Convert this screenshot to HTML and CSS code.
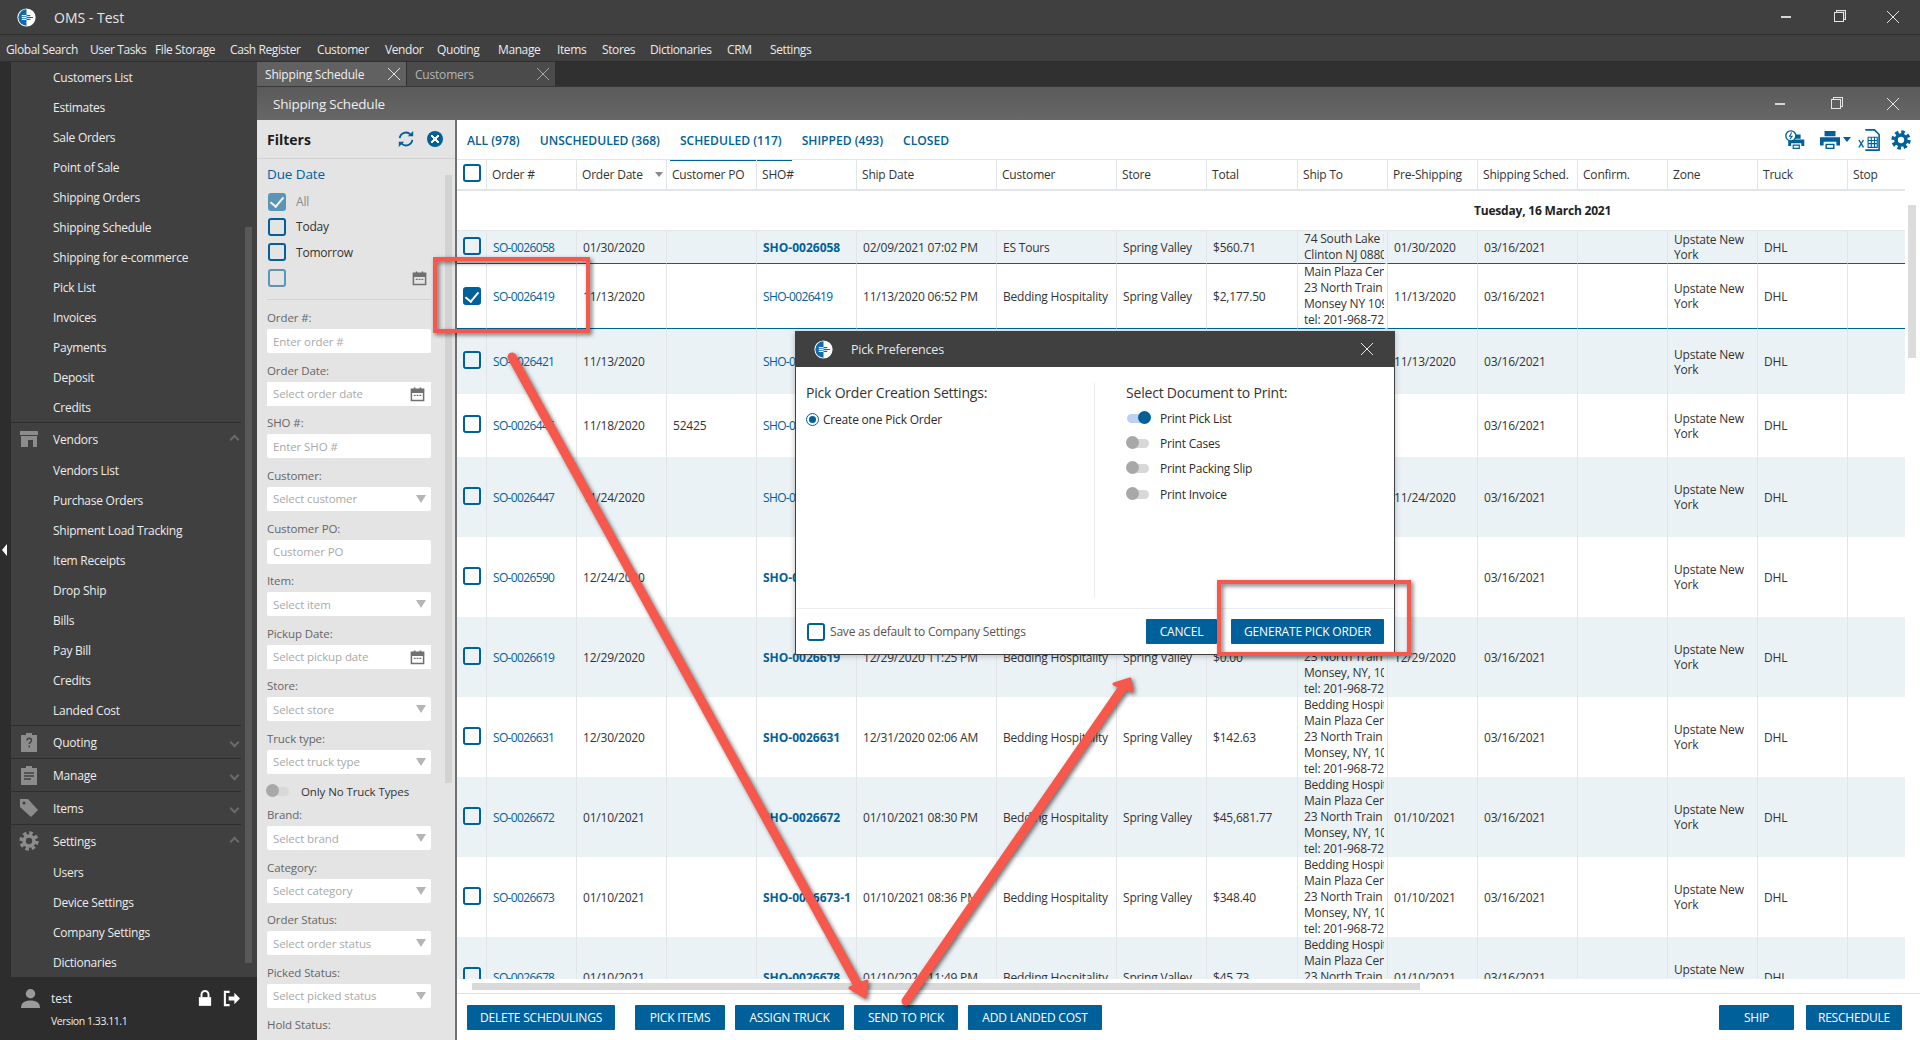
FILE: index.html
```html
<!DOCTYPE html>
<html lang="en">
<head>
  <meta charset="UTF-8">
  <title>OMS - Test</title>
  <link rel="stylesheet" href="styles.css">
</head>
<body>
  <svg class="icon-defs" width="0" height="0">
    <symbol id="logo" viewBox="0 0 20 20">
      <circle cx="10" cy="10" r="9.6" fill="#fff"/>
      <path d="M10 1.4a8.6 8.6 0 0 0 0 17.2z" fill="#0f6ca8"/>
      <path d="M5 8h9M5 10h12M5 12h9" stroke="#0f6ca8" stroke-width="1.2"/>
      <path d="M5 8h5M5 10h5M5 12h5" stroke="#fff" stroke-width="1.2"/>
    </symbol>
    <symbol id="gear" viewBox="0 0 24 24">
      <circle cx="12" cy="12" r="6" fill="none" stroke="currentColor" stroke-width="4.4"/>
      <circle cx="12" cy="12" r="9.6" fill="none" stroke="currentColor" stroke-width="4" stroke-dasharray="4.2 3.34"/>
    </symbol>
    <symbol id="calendar" viewBox="0 0 16 16">
      <path d="M1.5 3h13v12h-13zM1.5 6.2h13" fill="none" stroke="currentColor" stroke-width="1.6"/>
      <path d="M1 2.6h14v3.4H1zM4 1h1.8v2H4zM10.2 1H12v2h-1.8z" fill="currentColor"/>
      <path d="M4 9.5h2M7 9.5h2M10 9.5h2" stroke="currentColor" stroke-width="1.2"/>
    </symbol>
    <symbol id="printer" viewBox="0 0 24 22">
      <path d="M6 1h12v6H6zM1 8h22v9h-4v-4H5v4H1zM7 15h10v6H7z" fill="currentColor"/>
      <path d="M8.6 16.6h6.8v2.8H8.6z" fill="#fff"/>
    </symbol>
  </svg>

  <header class="titlebar">
    <svg class="logo"><use href="#logo"/></svg>
    <span class="app-title">OMS - Test</span>
    <div class="win-controls">
      <span class="win-min"></span>
      <span class="win-restore"></span>
      <span class="win-close"></span>
    </div>
  </header>

  <nav class="menubar">
    <a>Global Search</a><a>User Tasks</a><a>File Storage</a><a>Cash Register</a><a>Customer</a><a>Vendor</a><a>Quoting</a><a>Manage</a><a>Items</a><a>Stores</a><a>Dictionaries</a><a>CRM</a><a>Settings</a>
  </nav>

  <div class="workspace">
    <aside class="sidebar">
      <div class="side-nav">
        <a class="side-link">Customers List</a>
        <a class="side-link">Estimates</a>
        <a class="side-link">Sale Orders</a>
        <a class="side-link">Point of Sale</a>
        <a class="side-link">Shipping Orders</a>
        <a class="side-link">Shipping Schedule</a>
        <a class="side-link">Shipping for e-commerce</a>
        <a class="side-link">Pick List</a>
        <a class="side-link">Invoices</a>
        <a class="side-link">Payments</a>
        <a class="side-link">Deposit</a>
        <a class="side-link">Credits</a>
        <div class="side-group">
          <svg class="side-icon" viewBox="0 0 20 20"><path d="M1 2h18v4H1zM2 7h16v11h-4v-7H9v7H2z" fill="#8c8c8c"/></svg>
          Vendors<span class="chev up"></span>
        </div>
        <a class="side-link">Vendors List</a>
        <a class="side-link">Purchase Orders</a>
        <a class="side-link">Shipment Load Tracking</a>
        <a class="side-link">Item Receipts</a>
        <a class="side-link">Drop Ship</a>
        <a class="side-link">Bills</a>
        <a class="side-link">Pay Bill</a>
        <a class="side-link">Credits</a>
        <a class="side-link">Landed Cost</a>
        <div class="side-group">
          <svg class="side-icon" viewBox="0 0 20 20"><path d="M2 3h5V1h6v2h5v17H2z" fill="#8c8c8c"/><path d="M8 8.5c0-3 4.500-3 4.500 0 0 2-2.200 1.800-2.200 3.500M10.300 13.500v2" stroke="#404040" stroke-width="1.400" fill="none"/></svg>
          Quoting<span class="chev"></span>
        </div>
        <div class="side-group">
          <svg class="side-icon" viewBox="0 0 20 20"><path d="M2 3h5V1h6v2h5v17H2z" fill="#8c8c8c"/><path d="M5 8h10M5 11h10M5 14h7" stroke="#404040" stroke-width="1.500"/></svg>
          Manage<span class="chev"></span>
        </div>
        <div class="side-group">
          <svg class="side-icon" viewBox="0 0 20 20"><path d="M1 1h8l10 11-7 7L1 9z" fill="#8c8c8c"/><circle cx="5" cy="5" r="1.500" fill="#404040"/></svg>
          Items<span class="chev"></span>
        </div>
        <div class="side-group">
          <svg class="side-icon gear-icon"><use href="#gear"/></svg>
          Settings<span class="chev up"></span>
        </div>
        <a class="side-link">Users</a>
        <a class="side-link">Device Settings</a>
        <a class="side-link">Company Settings</a>
        <a class="side-link">Dictionaries</a>
      </div>
      <div class="side-foot">
        <div class="user-row">
          <svg class="user-icon" viewBox="0 0 20 22"><circle cx="10" cy="6" r="5" fill="#9a9a9a"/><path d="M0 21c0-6 4-8 10-8s10 2 10 8z" fill="#9a9a9a"/></svg>
          <span class="user-name">test</span>
          <svg class="lock-icon" viewBox="0 0 16 20"><path d="M4 9V6a4 4 0 0 1 8 0v3" fill="none" stroke="#fff" stroke-width="2.200"/><path d="M1 9h14v10H1z" fill="#fff"/></svg>
          <svg class="logout-icon" viewBox="0 0 18 18"><path d="M7 2H2v14h5" fill="none" stroke="#fff" stroke-width="2.200"/><path d="M6 7h6V3l6 6-6 6v-4H6z" fill="#fff"/></svg>
        </div>
        <div class="version">Version 1.33.11.1</div>
      </div>
      <span class="side-track"></span>
      <span class="collapse-arrow"></span>
    </aside>

    <div class="content">
      <div class="doc-tabs">
        <div class="doc-tab active">Shipping Schedule<span class="x-mark"></span></div>
        <div class="doc-tab">Customers<span class="x-mark dim"></span></div>
      </div>

      <div class="win-head">
        <span>Shipping Schedule</span>
        <div class="win-controls small">
          <span class="win-min"></span>
          <span class="win-restore"></span>
          <span class="win-close"></span>
        </div>
      </div>

      <div class="win-body">
        <section class="filters">
          <div class="filters-head">
            <h2>Filters</h2>
            <svg class="refresh" viewBox="0 0 20 20"><path d="M3 9a7 7 0 0 1 12-4M17 11a7 7 0 0 1-12 4" fill="none" stroke="#00609a" stroke-width="2"/><path d="M12 7h6V1zM8 13H2v6z" fill="#00609a"/></svg>
            <span class="close-round"></span>
          </div>
          <div class="filters-body">
            <h3>Due Date</h3>
            <label class="check-row muted"><span class="chk on"></span>All</label>
            <label class="check-row"><span class="chk"></span>Today</label>
            <label class="check-row"><span class="chk"></span>Tomorrow</label>
            <label class="check-row"><span class="chk faded"></span><svg class="cal push"><use href="#calendar"/></svg></label>
            <hr class="filter-rule">

            <div class="field"><label>Order #:</label><input class="box" placeholder="Enter order #"></div>
            <div class="field"><label>Order Date:</label><div class="box square">Select order date<svg class="cal"><use href="#calendar"/></svg></div></div>
            <div class="field"><label>SHO #:</label><input class="box" placeholder="Enter SHO #"></div>
            <div class="field"><label>Customer:</label><div class="box">Select customer<span class="caret"></span></div></div>
            <div class="field"><label>Customer PO:</label><input class="box" placeholder="Customer PO"></div>
            <div class="field"><label>Item:</label><div class="box">Select item<span class="caret"></span></div></div>
            <div class="field"><label>Pickup Date:</label><div class="box square">Select pickup date<svg class="cal"><use href="#calendar"/></svg></div></div>
            <div class="field"><label>Store:</label><div class="box">Select store<span class="caret"></span></div></div>
            <div class="field"><label>Truck type:</label><div class="box">Select truck type<span class="caret"></span></div></div>
            <div class="only-row"><span class="toggle"></span>Only No Truck Types</div>
            <div class="field"><label>Brand:</label><div class="box">Select brand<span class="caret"></span></div></div>
            <div class="field"><label>Category:</label><div class="box">Select category<span class="caret"></span></div></div>
            <div class="field"><label>Order Status:</label><div class="box">Select order status<span class="caret"></span></div></div>
            <div class="field"><label>Picked Status:</label><div class="box">Select picked status<span class="caret"></span></div></div>
            <div class="field"><label>Hold Status:</label></div>
            <span class="filter-track"></span>
          </div>
        </section>

        <section class="orders">
          <div class="status-tabs">
            <a>ALL (978)</a><a>UNSCHEDULED (368)</a><a class="current">SCHEDULED (117)</a><a>SHIPPED (493)</a><a>CLOSED</a>
            <div class="tools">
              <svg class="tool first" viewBox="0 0 24 24">
                <use href="#printer" x="3" y="4" width="21" height="20"/>
                <circle cx="7" cy="7" r="6" fill="#fff" stroke="currentColor" stroke-width="1.600"/>
                <path d="M8 3L5.500 7.500h3L6 11" fill="none" stroke="currentColor" stroke-width="1.300"/>
              </svg>
              <svg class="tool"><use href="#printer"/></svg>
              <span class="tool-caret"></span>
              <svg class="tool sheet" viewBox="0 0 24 26">
                <path d="M8 2h10l5 5v17H8" fill="none" stroke="currentColor" stroke-width="1.800"/>
                <path d="M11 10h10v11H11zM14.500 10v11M18 10v11M11 13.500h10M11 17h10" fill="none" stroke="currentColor" stroke-width="1.200"/>
                <path d="M1 13l5 8M6 13l-5 8" stroke="currentColor" stroke-width="1.500"/>
              </svg>
              <svg class="tool"><use href="#gear"/></svg>
            </div>
          </div>

          <div class="table-wrap">
            <table class="grid">
              <colgroup>
                <col class="c29"><col class="c90"><col class="c90"><col class="c90"><col class="c100"><col class="c140"><col class="c120"><col class="c90"><col class="c91"><col class="c90"><col class="c90"><col class="c100"><col class="c90"><col class="c90"><col class="c90"><col class="c58">
              </colgroup>
              <thead>
                <tr>
                  <th><span class="chk"></span></th><th>Order #</th><th>Order Date<span class="sort"></span></th><th>Customer PO</th><th>SHO#</th><th>Ship Date</th><th>Customer</th><th>Store</th><th>Total</th><th>Ship To</th><th>Pre-Shipping</th><th>Shipping Sched.</th><th>Confirm.</th><th>Zone</th><th>Truck</th><th>Stop</th>
                </tr>
              </thead>
              <tbody>
                <tr class="date-row"><td colspan="16">Tuesday, 16 March 2021</td></tr>
                <tr class="shade h33">
                  <td><span class="chk"></span></td><td class="lnk">SO-0026058</td><td>01/30/2020</td><td></td><td class="lnk strong">SHO-0026058</td><td>02/09/2021 07:02 PM</td><td>ES Tours</td><td>Spring Valley</td><td>$560.71</td><td class="ship">74 South Lake Ln<br>Clinton NJ 08809</td><td>01/30/2020</td><td>03/16/2021</td><td></td><td>Upstate New York</td><td>DHL</td><td></td>
                </tr>
                <tr class="picked h65">
                  <td><span class="chk on"></span></td><td class="lnk">SO-0026419</td><td>11/13/2020</td><td></td><td class="lnk">SHO-0026419</td><td>11/13/2020 06:52 PM</td><td>Bedding Hospitality</td><td>Spring Valley</td><td>$2,177.50</td><td class="ship">Main Plaza Center<br>23 North Train St<br>Monsey NY 10952<br>tel: 201-968-7200</td><td>11/13/2020</td><td>03/16/2021</td><td></td><td>Upstate New York</td><td>DHL</td><td></td>
                </tr>
                <tr class="shade h65">
                  <td><span class="chk"></span></td><td class="lnk">SO-0026421</td><td>11/13/2020</td><td></td><td class="lnk">SHO-0026421</td><td>11/13/2020 06:58 PM</td><td>Bedding Hospitality</td><td>Spring Valley</td><td>$1,240.00</td><td class="ship">Main Plaza Center<br>23 North Train St<br>Monsey NY 10952<br>tel: 201-968-7200</td><td>11/13/2020</td><td>03/16/2021</td><td></td><td>Upstate New York</td><td>DHL</td><td></td>
                </tr>
                <tr class="h63">
                  <td><span class="chk"></span></td><td class="lnk">SO-0026445</td><td>11/18/2020</td><td>52425</td><td class="lnk">SHO-0026445</td><td>11/18/2020 05:10 PM</td><td>Bedding Hospitality</td><td>Spring Valley</td><td>$312.00</td><td class="ship">Main Plaza Center<br>23 North Train St<br>Monsey NY 10952</td><td></td><td>03/16/2021</td><td></td><td>Upstate New York</td><td>DHL</td><td></td>
                </tr>
                <tr class="shade h80">
                  <td><span class="chk"></span></td><td class="lnk">SO-0026447</td><td>11/24/2020</td><td></td><td class="lnk">SHO-0026447</td><td>11/24/2020 03:20 PM</td><td>Bedding Hospitality</td><td>Spring Valley</td><td>$95.00</td><td class="ship">Main Plaza Center<br>23 North Train St<br>Monsey NY 10952</td><td>11/24/2020</td><td>03/16/2021</td><td></td><td>Upstate New York</td><td>DHL</td><td></td>
                </tr>
                <tr class="h80">
                  <td><span class="chk"></span></td><td class="lnk">SO-0026590</td><td>12/24/2020</td><td></td><td class="lnk strong">SHO-0026590</td><td>12/24/2020 04:15 PM</td><td>Bedding Hospitality</td><td>Spring Valley</td><td>$70.00</td><td class="ship">Main Plaza Center<br>23 North Train St<br>Monsey NY 10952</td><td></td><td>03/16/2021</td><td></td><td>Upstate New York</td><td>DHL</td><td></td>
                </tr>
                <tr class="shade h80">
                  <td><span class="chk"></span></td><td class="lnk">SO-0026619</td><td>12/29/2020</td><td></td><td class="lnk strong">SHO-0026619</td><td>12/29/2020 11:25 PM</td><td>Bedding Hospitality</td><td>Spring Valley</td><td>$0.00</td><td class="ship">Bedding Hospitality<br>Main Plaza Center<br>23 North Train St<br>Monsey, NY, 10952<br>tel: 201-968-7200</td><td>12/29/2020</td><td>03/16/2021</td><td></td><td>Upstate New York</td><td>DHL</td><td></td>
                </tr>
                <tr class="h80">
                  <td><span class="chk"></span></td><td class="lnk">SO-0026631</td><td>12/30/2020</td><td></td><td class="lnk strong">SHO-0026631</td><td>12/31/2020 02:06 AM</td><td>Bedding Hospitality</td><td>Spring Valley</td><td>$142.63</td><td class="ship">Bedding Hospitality<br>Main Plaza Center<br>23 North Train St<br>Monsey, NY, 10952<br>tel: 201-968-7200</td><td></td><td>03/16/2021</td><td></td><td>Upstate New York</td><td>DHL</td><td></td>
                </tr>
                <tr class="shade h80">
                  <td><span class="chk"></span></td><td class="lnk">SO-0026672</td><td>01/10/2021</td><td></td><td class="lnk strong">SHO-0026672</td><td>01/10/2021 08:30 PM</td><td>Bedding Hospitality</td><td>Spring Valley</td><td>$45,681.77</td><td class="ship">Bedding Hospitality<br>Main Plaza Center<br>23 North Train St<br>Monsey, NY, 10952<br>tel: 201-968-7200</td><td>01/10/2021</td><td>03/16/2021</td><td></td><td>Upstate New York</td><td>DHL</td><td></td>
                </tr>
                <tr class="h80">
                  <td><span class="chk"></span></td><td class="lnk">SO-0026673</td><td>01/10/2021</td><td></td><td class="lnk strong">SHO-0026673-1</td><td>01/10/2021 08:36 PM</td><td>Bedding Hospitality</td><td>Spring Valley</td><td>$348.40</td><td class="ship">Bedding Hospitality<br>Main Plaza Center<br>23 North Train St<br>Monsey, NY, 10952<br>tel: 201-968-7200</td><td>01/10/2021</td><td>03/16/2021</td><td></td><td>Upstate New York</td><td>DHL</td><td></td>
                </tr>
                <tr class="shade h80">
                  <td><span class="chk"></span></td><td class="lnk">SO-0026678</td><td>01/10/2021</td><td></td><td class="lnk strong">SHO-0026678</td><td>01/10/2021 11:49 PM</td><td>Bedding Hospitality</td><td>Spring Valley</td><td>$45.73</td><td class="ship">Bedding Hospitality<br>Main Plaza Center<br>23 North Train St<br>Monsey, NY, 10952<br>tel: 201-968-7200</td><td>01/10/2021</td><td>03/16/2021</td><td></td><td>Upstate New York</td><td>DHL</td><td></td>
                </tr>
              </tbody>
            </table>
            <span class="v-thumb"></span>
          </div>

          <div class="h-scroll"><span class="h-thumb"></span></div>

          <div class="actions">
            <button class="btn gap-after">DELETE SCHEDULINGS</button>
            <button class="btn pick">PICK ITEMS</button>
            <button class="btn assign">ASSIGN TRUCK</button>
            <button class="btn send">SEND TO PICK</button>
            <button class="btn landed">ADD LANDED COST</button>
            <button class="btn ship-btn">SHIP</button>
            <button class="btn resched">RESCHEDULE</button>
          </div>
        </section>
      </div>
    </div>
  </div>

  <!-- modal -->
  <div class="dialog">
    <div class="dialog-head">
      <svg class="logo"><use href="#logo"/></svg>
      <span>Pick Preferences</span>
      <span class="x-mark wide"></span>
    </div>
    <div class="dialog-body">
      <div class="pane left">
        <h4>Pick Order Creation Settings:</h4>
        <label class="radio-row"><span class="radio"></span>Create one Pick Order</label>
      </div>
      <div class="pane right">
        <h4>Select Document to Print:</h4>
        <div class="toggle-row"><span class="toggle on"></span>Print Pick List</div>
        <div class="toggle-row"><span class="toggle"></span>Print Cases</div>
        <div class="toggle-row"><span class="toggle"></span>Print Packing Slip</div>
        <div class="toggle-row"><span class="toggle"></span>Print Invoice</div>
      </div>
    </div>
    <div class="dialog-foot">
      <span class="chk"></span>
      <span class="save-label">Save as default to Company Settings</span>
      <button class="btn cancel">CANCEL</button>
      <button class="btn generate">GENERATE PICK ORDER</button>
    </div>
  </div>

  <!-- red callouts drawn over the screenshot -->
  <svg class="callouts" width="1920" height="1040" viewBox="0 0 1920 1040">
    <rect x="435" y="259" width="153" height="72"/>
    <rect x="1219" y="582" width="190" height="72"/>
    <line x1="512" y1="357" x2="859" y2="987"/>
    <polygon points="850,988 867,981 865,997"/>
    <line x1="906" y1="1001" x2="1124" y2="686"/>
    <polygon points="1114,684 1130,679 1132,691"/>
  </svg>
</body>
</html>
```

FILE: styles.css
```css
:root {
  --blue: #00609a;
  --dark: #404040;
  --darker: #2d2d2d;
  --shade: #ebf2f6;
  --line: #e2e6e8;
  --red: #f8584c;
}

* {
  box-sizing: border-box;
}

html {
  height: 1040px;
  overflow: hidden;
}

body {
  margin: 0;
  width: 1920px;
  height: 1040px;
  overflow: hidden;
  position: relative;
  font-family: 'Open Sans', 'Noto Sans', sans-serif;
  font-size: 12px;
  color: #2b2b2b;
  background: var(--darker);
}

h2, h3, h4 {
  margin: 0;
}

.icon-defs {
  position: absolute;
}

/* title + menu */
.titlebar {
  height: 35px;
  display: flex;
  align-items: center;
  background: var(--dark);
  border-bottom: 1px solid #2f2f2f;
  color: #e6e6e6;
  padding-left: 17px;
}
.logo {
  width: 19px;
  height: 19px;
  flex: none;
}
.app-title {
  margin-left: 18px;
  font-size: 14px;
}
.win-controls {
  margin-left: auto;
  display: flex;
  align-items: center;
  gap: 43px;
  padding-right: 21px;
}
.win-controls.small {
  gap: 46px;
  padding-right: 21px;
}
.win-min {
  width: 10px;
  height: 2px;
  background: #d5d5d5;
}
.win-restore {
  width: 10px;
  height: 10px;
  border: 1px solid #e6e6e6;
  box-shadow: 2px -2px 0 -1px #616161, 2px -2px 0 0 #e6e6e6;
}
.win-close, .x-mark {
  width: 12px;
  height: 12px;
  flex: none;
  background:
    linear-gradient(45deg, transparent 46%, #e6e6e6 46%, #e6e6e6 54%, transparent 54%),
    linear-gradient(-45deg, transparent 46%, #e6e6e6 46%, #e6e6e6 54%, transparent 54%);
}
.x-mark.dim {
  opacity: .6;
}
.menubar {
  height: 27px;
  display: grid;
  grid-template-columns: 84px 65px 75px 87px 68px 52px 61px 59px 45px 48px 77px 43px auto;
  align-items: center;
  background: var(--dark);
  border-bottom: 1px solid #2f2f2f;
  padding: 3px 0 0 6px;
  color: #eaeaea;
  letter-spacing: -.4px;
}

/* left nav */
.workspace {
  display: flex;
  height: 978px;
  overflow: hidden;
}
.sidebar {
  width: 257px;
  flex: none;
  position: relative;
  background: var(--darker);
  color: #ececec;
}
.side-nav {
  margin-left: 11px;
  width: 246px;
  height: 915px;
  background: var(--dark);
}
.side-link {
  display: flex;
  align-items: center;
  height: 30px;
  padding-left: 42px;
  letter-spacing: -.25px;
}
.side-group {
  display: flex;
  align-items: center;
  height: 33px;
  width: 230px;
  padding-left: 8px;
  border-top: 1px solid #2e2e2e;
  font-size: 12px;
  letter-spacing: -.2px;
  gap: 14px;
}
.side-icon {
  width: 20px;
  height: 20px;
  flex: none;
}
.gear-icon {
  color: #8c8c8c;
}
.chev {
  margin-left: auto;
  margin-right: 3px;
  width: 7px;
  height: 7px;
  border-right: 2px solid #6a6a6a;
  border-bottom: 2px solid #6a6a6a;
  transform: rotate(45deg);
}
.chev.up {
  transform: rotate(225deg);
}
.side-foot {
  height: 63px;
  padding: 8px 0 0 21px;
}
.user-row {
  display: flex;
  align-items: center;
  height: 26px;
}
.user-icon {
  width: 19px;
  height: 21px;
}
.user-name {
  margin-left: 11px;
}
.lock-icon {
  width: 14px;
  height: 18px;
  margin-left: 126px;
}
.logout-icon {
  width: 17px;
  height: 17px;
  margin-left: 11px;
}
.version {
  margin: 3px 0 0 30px;
  font-size: 10.500px;
  letter-spacing: -.45px;
}
.side-track {
  position: absolute;
  left: 245px;
  top: 165px;
  width: 7px;
  height: 736px;
  background: #585858;
}
.collapse-arrow {
  position: absolute;
  left: 2px;
  top: 482px;
  border: 6px solid transparent;
  border-left: 0;
  border-right: 5px solid #fff;
}

/* tabs + window */
.content {
  flex: 1;
  display: flex;
  flex-direction: column;
  min-width: 0;
  background: #303030;
}
.doc-tabs {
  height: 24px;
  display: flex;
  gap: 1px;
}
.doc-tab {
  width: 148px;
  display: flex;
  align-items: center;
  justify-content: space-between;
  padding: 0 6px 0 8px;
  background: #4b4b4b;
  color: #b4b4b4;
  letter-spacing: -.2px;
}
.doc-tab.active {
  background: #616161;
  color: #f0f0f0;
  width: 149px;
}
.win-head {
  height: 34px;
  display: flex;
  align-items: center;
  padding-left: 16px;
  font-size: 13.500px;
  color: #eeeeee;
  background: linear-gradient(#5a5a5a, #676767);
  border-top: 1px solid #3a3a3a;
  letter-spacing: -.2px;
}
.win-body {
  flex: 1;
  display: flex;
  min-height: 0;
}

/* filters column */
.filters {
  width: 200px;
  flex: none;
  background: #e4e4e4;
  border-right: 2px solid #707070;
  display: flex;
  flex-direction: column;
  overflow: hidden;
}
.filters-head {
  height: 39px;
  flex: none;
  display: flex;
  align-items: center;
  padding: 0 12px 0 10px;
  border-bottom: 1px solid #d2d2d2;
}
.filters-head h2 {
  font-size: 14px;
  font-weight: 700;
  color: #1c1c1c;
  margin-right: auto;
}
.refresh {
  width: 18px;
  height: 18px;
  margin-right: 12px;
}
.close-round {
  width: 16px;
  height: 16px;
  border-radius: 50%;
  background: var(--blue);
  display: flex;
  align-items: center;
  justify-content: center;
}
.close-round::after {
  content: "";
  width: 8px;
  height: 8px;
  background:
    linear-gradient(45deg, transparent 42%, #fff 42%, #fff 58%, transparent 58%),
    linear-gradient(-45deg, transparent 42%, #fff 42%, #fff 58%, transparent 58%);
}
.filters-body {
  position: relative;
  padding: 0 25px 0 10px;
  flex: 1;
}
.filters-body h3 {
  height: 30px;
  line-height: 30px;
  font-size: 13.500px;
  font-weight: 500;
  color: var(--blue);
  letter-spacing: -.1px;
}
.check-row {
  height: 25.300px;
  display: flex;
  align-items: center;
  gap: 10px;
  padding-left: 1px;
  letter-spacing: -.2px;
  color: #333;
}
.check-row.muted {
  color: #8b8b8b;
}
.chk {
  width: 18px;
  height: 18px;
  flex: none;
  display: inline-flex;
  align-items: center;
  justify-content: center;
  border: 2px solid var(--blue);
  border-radius: 3px;
}
.chk.on {
  background: var(--blue);
}
.chk.on::after {
  content: "";
  width: 6px;
  height: 11px;
  margin-top: -2px;
  border-right: 2px solid #fff;
  border-bottom: 2px solid #fff;
  transform: rotate(40deg);
}
.check-row .chk.on, .chk.faded {
  opacity: .6;
}
.cal {
  width: 15px;
  height: 16px;
  color: #707070;
  flex: none;
}
.push {
  margin-left: auto;
  margin-right: 3px;
}
.filter-rule {
  margin: 9px 0 6px;
  border: 0;
  border-top: 1px solid #d3d3d3;
}
.field {
  height: 52.600px;
}
.field label {
  display: block;
  height: 23px;
  line-height: 23px;
  color: #666;
  font-size: 11.500px;
  letter-spacing: -.1px;
}
.box {
  display: flex;
  align-items: center;
  justify-content: space-between;
  width: 164px;
  height: 24px;
  padding: 0 6px;
  border: 0;
  border-radius: 2px;
  background: #fff;
  color: #a9a9a9;
  font: 11.500px 'Open Sans', 'Noto Sans', sans-serif;
  letter-spacing: -.1px;
}
.box::placeholder {
  color: #a9a9a9;
  opacity: 1;
}
.box.square {
  border-radius: 0;
}
.caret {
  margin-right: -1px;
  border: 5px solid transparent;
  border-top: 8px solid #b5b5b5;
  border-bottom: 0;
}
.only-row {
  height: 23.500px;
  display: flex;
  align-items: center;
  gap: 12px;
  font-size: 11.500px;
  letter-spacing: -.1px;
  color: #333;
}
.toggle {
  position: relative;
  width: 22px;
  height: 9px;
  flex: none;
  border-radius: 5px;
  background: #d8d8d8;
}
.toggle::after {
  content: "";
  position: absolute;
  left: -1px;
  top: -3px;
  width: 13px;
  height: 13px;
  border-radius: 50%;
  background: #a8a8a8;
}
.toggle.on {
  background: #bcd0f0;
}
.toggle.on::after {
  left: auto;
  right: -2px;
  background: var(--blue);
}
.filter-track {
  position: absolute;
  left: 188px;
  top: 16px;
  width: 7px;
  height: 608px;
  background: #d2d2d2;
}

/* orders */
.orders {
  flex: 1;
  min-width: 0;
  background: #fff;
  display: flex;
  flex-direction: column;
}
.status-tabs {
  height: 39px;
  flex: none;
  display: flex;
  align-items: stretch;
  color: var(--blue);
  font-size: 12.100px;
  font-weight: 600;
}
.status-tabs a {
  display: flex;
  align-items: center;
  padding: 2px 10px 0;
}
.status-tabs a.current {
  box-shadow: 0 2px 0 var(--blue);
}
.tools {
  margin-left: auto;
  display: flex;
  align-items: center;
  color: var(--blue);
  padding-right: 8px;
}
.tool {
  width: 22px;
  height: 20px;
}
.tool.first {
  margin-right: 13px;
}
.tool-caret {
  margin: 0 7px 0 2px;
  border: 4px solid transparent;
  border-top: 5px solid var(--blue);
  border-bottom: 0;
}
.tool.sheet {
  height: 24px;
  margin-right: 10px;
}
.table-wrap {
  position: relative;
  height: 820px;
  flex: none;
  overflow: hidden;
}
.grid {
  width: 1448px;
  table-layout: fixed;
  border-collapse: separate;
  border-spacing: 0;
}
.c29 { width: 29px; }
.c58 { width: 58px; }
.c90 { width: 90px; }
.c91 { width: 91px; }
.c100 { width: 100px; }
.c120 { width: 120px; }
.c140 { width: 140px; }
.grid th {
  height: 32px;
  padding: 0 0 0 5px;
  text-align: left;
  font-weight: 400;
  color: #333;
  white-space: nowrap;
  border-top: 1px solid var(--line);
  border-bottom: 2px solid var(--line);
  border-left: 1px solid var(--line);
  letter-spacing: -.2px;
}
.grid th:first-child, .grid td:first-child {
  border-left: 0;
  padding-left: 6px;
}
.sort {
  display: inline-block;
  margin-left: 12px;
  vertical-align: 2px;
  border: 4px solid transparent;
  border-top: 5px solid #8a8a8a;
  border-bottom: 0;
}
.grid td {
  padding: 0 0 0 6px;
  overflow: hidden;
  border-left: 1px solid var(--line);
  color: #333;
  letter-spacing: -.2px;
  line-height: 15px;
}
.grid .date-row td {
  height: 39px;
  border-left: 0;
  padding-left: 1017px;
  font-weight: 700;
  color: #222;
}
.shade td {
  background: var(--shade);
}
.h33 td {
  height: 33px;
  border-top: 1px solid var(--line);
}
.h65 td { height: 65px; }
.h63 td { height: 63px; }
.h80 td { height: 80px; }
.picked td {
  border-top: 1px solid var(--blue);
  border-bottom: 1px solid var(--blue);
}
.grid .lnk {
  color: var(--blue);
  letter-spacing: -.65px;
}
.grid .strong {
  font-weight: 700;
  letter-spacing: 0;
  white-space: nowrap;
}
.grid .ship {
  white-space: nowrap;
  line-height: 16px;
  border-right: 3px solid transparent;
}
.v-thumb {
  position: absolute;
  right: 4px;
  top: 46px;
  width: 8px;
  height: 153px;
  background: #dcdcdc;
}
.h-scroll {
  height: 15px;
  flex: none;
  padding: 4px 0 0 15px;
  border-bottom: 1px solid #e0e0e0;
}
.h-thumb {
  display: block;
  width: 948px;
  height: 7px;
  background: #d9d9d9;
}
.actions {
  flex: 1;
  display: flex;
  align-items: flex-start;
  padding: 11px 0 0 10px;
}
.btn {
  height: 25px;
  padding: 0;
  border: 0;
  border-radius: 1px;
  background: var(--blue);
  color: #fff;
  font: 12px 'Open Sans', 'Noto Sans', sans-serif;
  letter-spacing: -.2px;
}
.gap-after { width: 148px; margin-right: 20px; }
.pick { width: 90px; margin-right: 10px; }
.assign { width: 109px; margin-right: 10px; }
.send { width: 104px; margin-right: 10px; }
.landed { width: 134px; margin-right: auto; }
.ship-btn { width: 75px; margin-right: 12px; }
.resched { width: 96px; margin-right: 18px; }

/* dialog */
.dialog {
  position: absolute;
  left: 795px;
  top: 331px;
  width: 600px;
  height: 324px;
  display: flex;
  flex-direction: column;
  background: #fff;
  border: 1px solid #404040;
  border-top: 0;
  box-shadow: 0 1px 6px rgba(0, 0, 0, .25);
}
.dialog-head {
  height: 36px;
  flex: none;
  display: flex;
  align-items: center;
  background: var(--dark);
  color: #e8e8e8;
  padding: 0 21px 0 18px;
  font-size: 12.500px;
  letter-spacing: -.2px;
}
.dialog-head span:first-of-type {
  margin-left: 18px;
  margin-right: auto;
}
.dialog-body {
  height: 242px;
  flex: none;
  display: flex;
  border-bottom: 1px solid #ececec;
  padding-top: 16px;
}
.pane h4 {
  font-size: 14px;
  font-weight: 500;
  color: #333;
  height: 20px;
  line-height: 20px;
  margin-bottom: 6px;
  letter-spacing: -.2px;
}
.pane.left {
  width: 299px;
  height: 215px;
  padding-left: 10px;
  border-right: 1px solid #ececec;
}
.pane.right {
  padding-left: 31px;
}
.pane.right h4 {
  margin-bottom: 3px;
}
.radio-row {
  display: flex;
  align-items: center;
  gap: 4px;
  height: 20px;
  letter-spacing: -.2px;
}
.radio {
  width: 13px;
  height: 13px;
  border-radius: 50%;
  border: 1px solid var(--blue);
  padding: 2px;
  background: var(--blue) content-box;
}
.toggle-row {
  height: 25.200px;
  display: flex;
  align-items: center;
  gap: 11px;
  letter-spacing: -.2px;
  padding-left: 1px;
}
.dialog-foot {
  flex: 1;
  display: flex;
  align-items: center;
  padding: 0 10px 0 11px;
}
.save-label {
  margin-left: 5px;
  margin-right: auto;
  color: #555;
  letter-spacing: -.2px;
}
.cancel {
  width: 71px;
  margin-right: 14px;
}
.generate {
  width: 153px;
}

/* callouts */
.callouts {
  position: absolute;
  left: 0;
  top: 0;
  pointer-events: none;
  filter: drop-shadow(2px 2px 2px rgba(0, 0, 0, .55));
}
.callouts rect {
  fill: none;
  stroke: var(--red);
  stroke-width: 4;
}
.callouts line {
  stroke: var(--red);
  stroke-width: 9;
  stroke-linecap: round;
}
.callouts polygon {
  fill: var(--red);
  stroke: var(--red);
  stroke-width: 3;
  stroke-linejoin: round;
}
```
